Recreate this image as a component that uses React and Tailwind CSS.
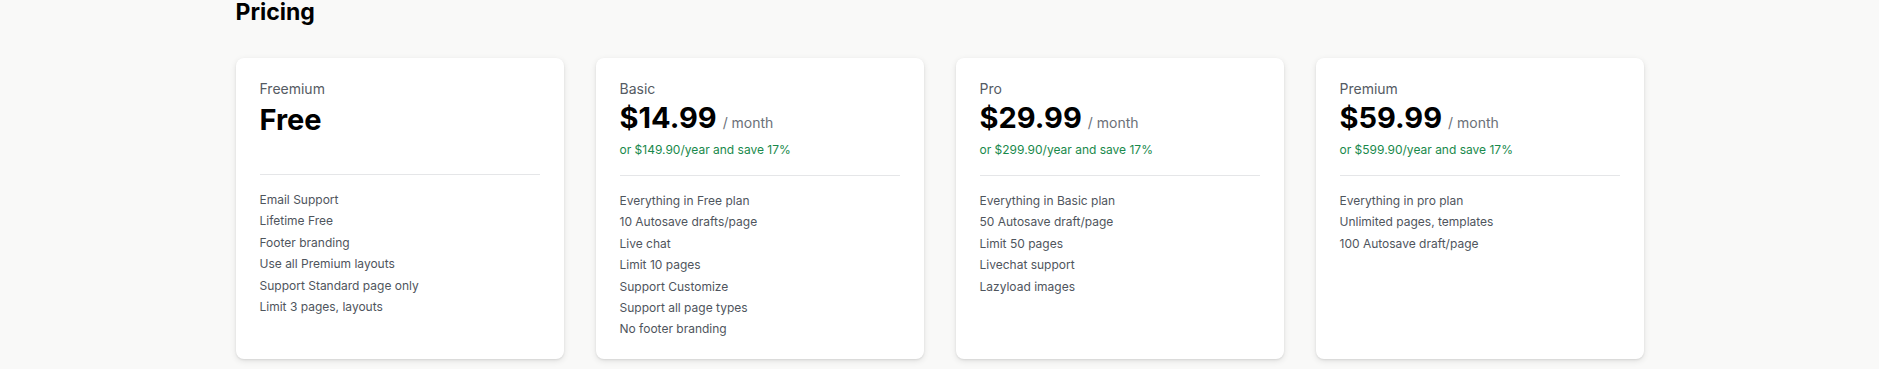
const PLANS = [
  {
    name: 'Freemium',
    price: 'Free',
    features: [
      'Email Support',
      'Lifetime Free',
      'Footer branding',
      'Use all Premium layouts',
      'Support Standard page only',
      'Limit 3 pages, layouts',
    ],
  },
  {
    name: 'Basic',
    price: '$14.99',
    yearly: 'or $149.90/year and save 17%',
    features: [
      'Everything in Free plan',
      '10 Autosave drafts/page',
      'Live chat',
      'Limit 10 pages',
      'Support Customize',
      'Support all page types',
      'No footer branding',
    ],
  },
  {
    name: 'Pro',
    price: '$29.99',
    yearly: 'or $299.90/year and save 17%',
    features: [
      'Everything in Basic plan',
      '50 Autosave draft/page',
      'Limit 50 pages',
      'Livechat support',
      'Lazyload images',
    ],
  },
  {
    name: 'Premium',
    price: '$59.99',
    yearly: 'or $599.90/year and save 17%',
    features: [
      'Everything in pro plan',
      'Unlimited pages, templates',
      '100 Autosave draft/page',
    ],
  },
];

function PlanCard({ plan }) {
  const isFree = !plan.yearly;

  return (
    <div className="bg-white rounded-lg shadow-[0_1px_2px_rgba(0,0,0,0.08),0_2px_6px_rgba(0,0,0,0.1)] px-6 pt-[21px] pb-[19px]">
      <div className="text-sm leading-5 text-[#555b63]">{plan.name}</div>
      {isFree ? (
        <div className="h-[75px] pt-[3px]">
          <div className="text-[29px] leading-9 font-bold text-black">{plan.price}</div>
        </div>
      ) : (
        <div className="h-[76px] pt-[1px]">
          <div className="flex items-baseline">
            <span className="text-[29px] leading-9 font-bold text-black">{plan.price}</span>
            <span className="ml-1.5 text-sm leading-5 text-[#6b7078]">/ month</span>
          </div>
          <div className="mt-[6px] text-xs leading-4 text-[#19894b]">{plan.yearly}</div>
        </div>
      )}
      <div className="border-t border-[#e5e6e8]" />
      <ul className="mt-[14px] text-xs leading-[21.4px] text-[#4f555d]">
        {plan.features.map((f) => (
          <li key={f}>{f}</li>
        ))}
      </ul>
    </div>
  );
}

export default function App() {
  return (
    <div className="min-h-[369px] bg-[#f9f9f8] font-['Inter',sans-serif]">
      <div className="w-[1408px] mx-auto">
        <h1 className="text-[23px] leading-6 font-bold text-black">Pricing</h1>
        <div className="mt-[34px] grid grid-cols-4 gap-8">
          {PLANS.map((plan) => (
            <PlanCard key={plan.name} plan={plan} />
          ))}
        </div>
      </div>
    </div>
  );
}
